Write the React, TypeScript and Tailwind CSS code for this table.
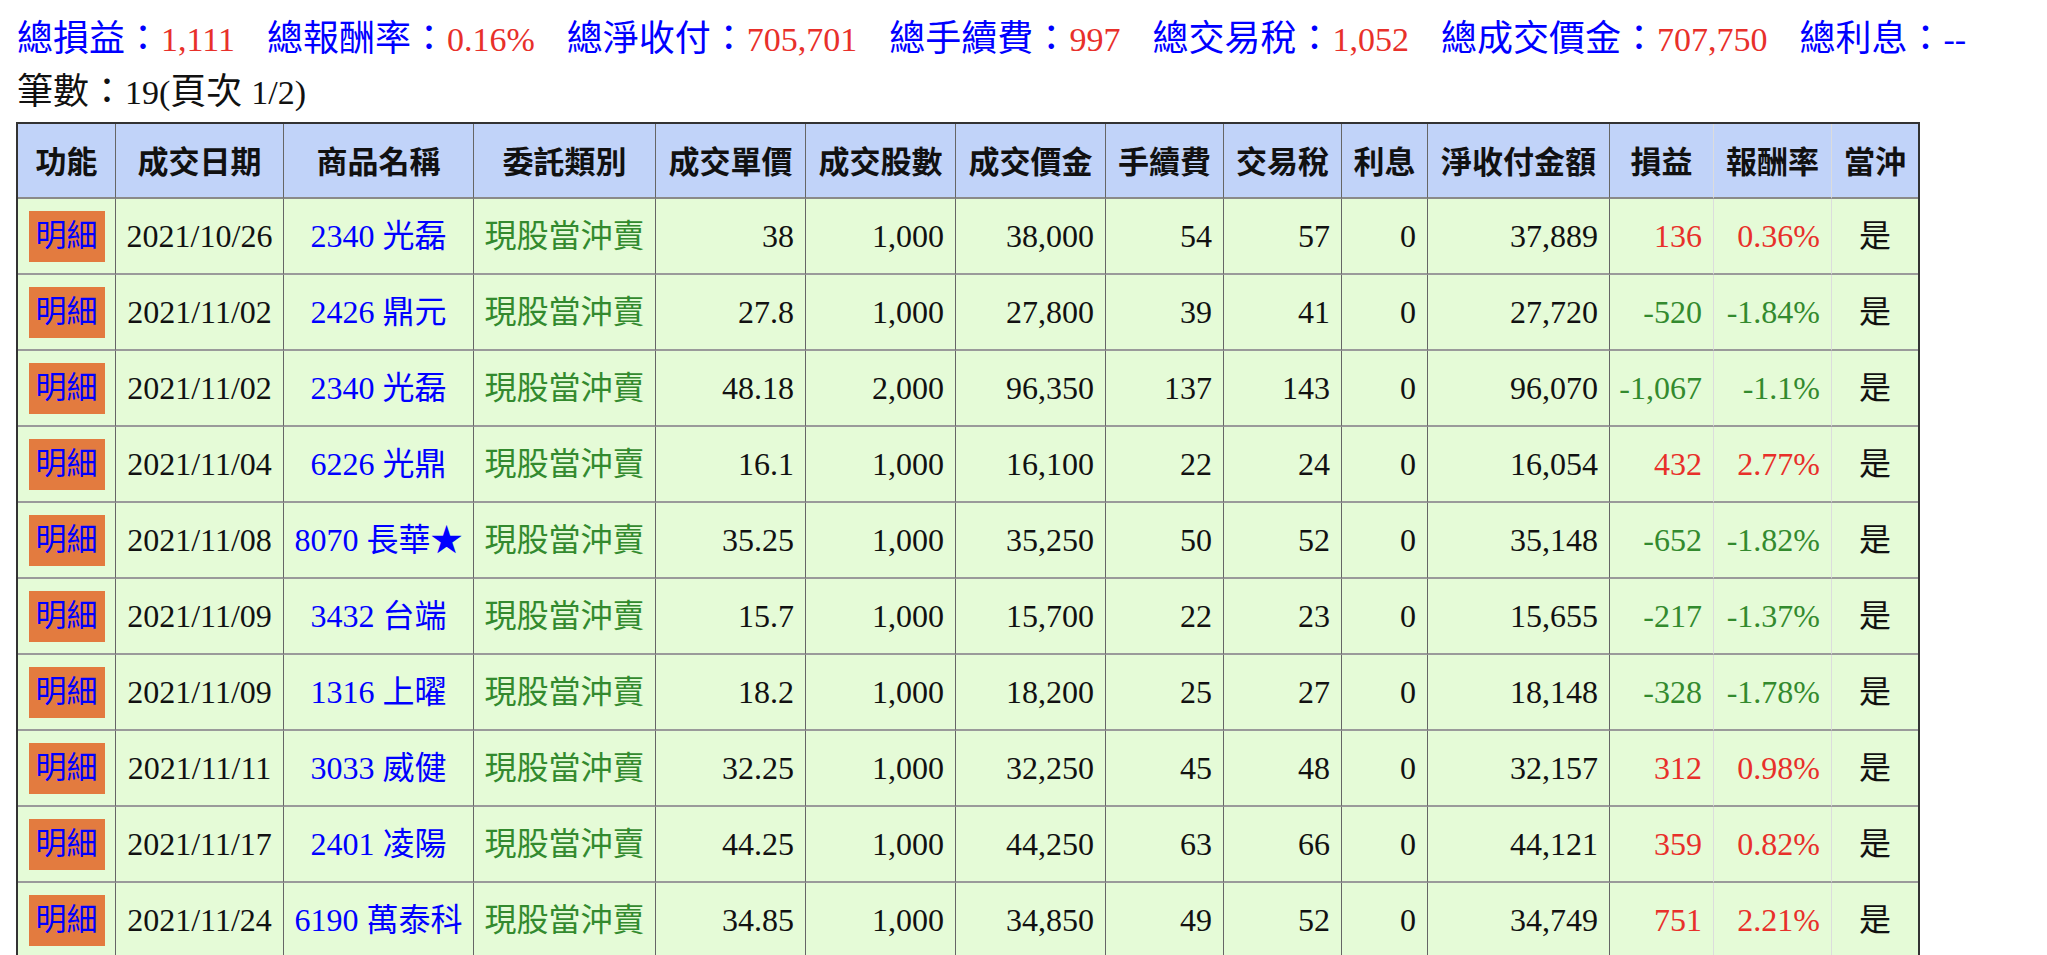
import React from 'react';

type Row = {
  date: string;
  name: string;
  price: string;
  qty: string;
  amount: string;
  fee: string;
  tax: string;
  interest: string;
  net: string;
  pl: string;
  rate: string;
};

const SUMMARY = [
  { label: '總損益：', value: '1,111', red: true },
  { label: '總報酬率：', value: '0.16%', red: true },
  { label: '總淨收付：', value: '705,701', red: true },
  { label: '總手續費：', value: '997', red: true },
  { label: '總交易稅：', value: '1,052', red: true },
  { label: '總成交價金：', value: '707,750', red: true },
  { label: '總利息：', value: '--', red: false },
];

const HEADERS = [
  '功能',
  '成交日期',
  '商品名稱',
  '委託類別',
  '成交單價',
  '成交股數',
  '成交價金',
  '手續費',
  '交易稅',
  '利息',
  '淨收付金額',
  '損益',
  '報酬率',
  '當沖',
];

const WIDTHS = [98, 168, 190, 182, 150, 150, 150, 118, 118, 86, 182, 104, 118, 86];

const ROWS: Row[] = [
  { date: '2021/10/26', name: '2340 光磊', price: '38', qty: '1,000', amount: '38,000', fee: '54', tax: '57', interest: '0', net: '37,889', pl: '136', rate: '0.36%' },
  { date: '2021/11/02', name: '2426 鼎元', price: '27.8', qty: '1,000', amount: '27,800', fee: '39', tax: '41', interest: '0', net: '27,720', pl: '-520', rate: '-1.84%' },
  { date: '2021/11/02', name: '2340 光磊', price: '48.18', qty: '2,000', amount: '96,350', fee: '137', tax: '143', interest: '0', net: '96,070', pl: '-1,067', rate: '-1.1%' },
  { date: '2021/11/04', name: '6226 光鼎', price: '16.1', qty: '1,000', amount: '16,100', fee: '22', tax: '24', interest: '0', net: '16,054', pl: '432', rate: '2.77%' },
  { date: '2021/11/08', name: '8070 長華★', price: '35.25', qty: '1,000', amount: '35,250', fee: '50', tax: '52', interest: '0', net: '35,148', pl: '-652', rate: '-1.82%' },
  { date: '2021/11/09', name: '3432 台端', price: '15.7', qty: '1,000', amount: '15,700', fee: '22', tax: '23', interest: '0', net: '15,655', pl: '-217', rate: '-1.37%' },
  { date: '2021/11/09', name: '1316 上曜', price: '18.2', qty: '1,000', amount: '18,200', fee: '25', tax: '27', interest: '0', net: '18,148', pl: '-328', rate: '-1.78%' },
  { date: '2021/11/11', name: '3033 威健', price: '32.25', qty: '1,000', amount: '32,250', fee: '45', tax: '48', interest: '0', net: '32,157', pl: '312', rate: '0.98%' },
  { date: '2021/11/17', name: '2401 凌陽', price: '44.25', qty: '1,000', amount: '44,250', fee: '63', tax: '66', interest: '0', net: '44,121', pl: '359', rate: '0.82%' },
  { date: '2021/11/24', name: '6190 萬泰科', price: '34.85', qty: '1,000', amount: '34,850', fee: '49', tax: '52', interest: '0', net: '34,749', pl: '751', rate: '2.21%' },
];

const cell = 'h-[76px] border-r border-r-[#666] border-b-2 border-b-[#9a9a9a] align-middle';
const num = `${cell} text-right pr-[11px]`;
// the two columns after 損益 have a light divider in the original
const lightR = 'border-r-[#dcdcdc]';

export default function App() {
  return (
    <div className="min-h-screen bg-white font-['Liberation_Serif','Noto_Sans_CJK_TC',serif] text-[#111]">
      <div className="pt-[13px] pl-[17px]">
        {/* summary line */}
        <div className="flex items-baseline whitespace-nowrap leading-[52px] text-[36px]">
          {SUMMARY.map((s, i) => (
            <span key={s.label} className={i > 0 ? 'ml-[32px]' : ''}>
              <span className="text-[#0000ff]">{s.label}</span>
              <span className={`text-[34px] ${s.red ? 'text-[#e8302a]' : 'text-[#0000ff]'}`}>{s.value}</span>
            </span>
          ))}
        </div>
        <div className="whitespace-nowrap leading-[52px] text-[36px]">
          筆數：<span className="text-[34px]">19(</span>頁次 <span className="text-[34px]">1/2)</span>
        </div>
      </div>

      <table className="mt-[3px] ml-[16px] table-fixed border-separate border-spacing-0 border-2 border-[#333] w-[1902px] text-[32px]">
        <colgroup>
          {WIDTHS.map((w, i) => (
            <col key={i} style={{ width: w }} />
          ))}
        </colgroup>
        <thead>
          <tr className="bg-[#c1d3f9]">
            {HEADERS.map((h, i) => (
              <th
                key={h}
                className={`h-[75px] border-b-2 border-b-[#8a8a8a] font-['Noto_Sans_CJK_TC',sans-serif] font-bold text-[31px] text-center align-middle ${
                  i === HEADERS.length - 1 ? '' : 'border-r border-r-[#666]'
                } ${i === 11 || i === 12 ? lightR : ''}`}
              >
                {h}
              </th>
            ))}
          </tr>
        </thead>
        <tbody>
          {ROWS.map((r, idx) => {
            const neg = r.pl.startsWith('-');
            const plColor = neg ? 'text-[#338a2e]' : 'text-[#e8302a]';
            return (
              <tr key={idx} className="bg-[#e5fbd7]">
                <td className={`${cell} text-center`}>
                  <div className="mx-auto flex h-[51px] w-[76px] items-center justify-center bg-[#e37b3f] text-[#0000ff] text-[31px]">
                    明細
                  </div>
                </td>
                <td className={`${cell} text-center`}>{r.date}</td>
                <td className={`${cell} text-center text-[#0000ff]`}>{r.name}</td>
                <td className={`${cell} text-center text-[#338a2e]`}>現股當沖賣</td>
                <td className={num}>{r.price}</td>
                <td className={num}>{r.qty}</td>
                <td className={num}>{r.amount}</td>
                <td className={num}>{r.fee}</td>
                <td className={num}>{r.tax}</td>
                <td className={num}>{r.interest}</td>
                <td className={num}>{r.net}</td>
                <td className={`${num} ${plColor} ${lightR}`}>{r.pl}</td>
                <td className={`${num} ${plColor} ${lightR}`}>{r.rate}</td>
                <td className="h-[76px] border-b-2 border-b-[#9a9a9a] text-center align-middle">是</td>
              </tr>
            );
          })}
        </tbody>
      </table>
    </div>
  );
}
